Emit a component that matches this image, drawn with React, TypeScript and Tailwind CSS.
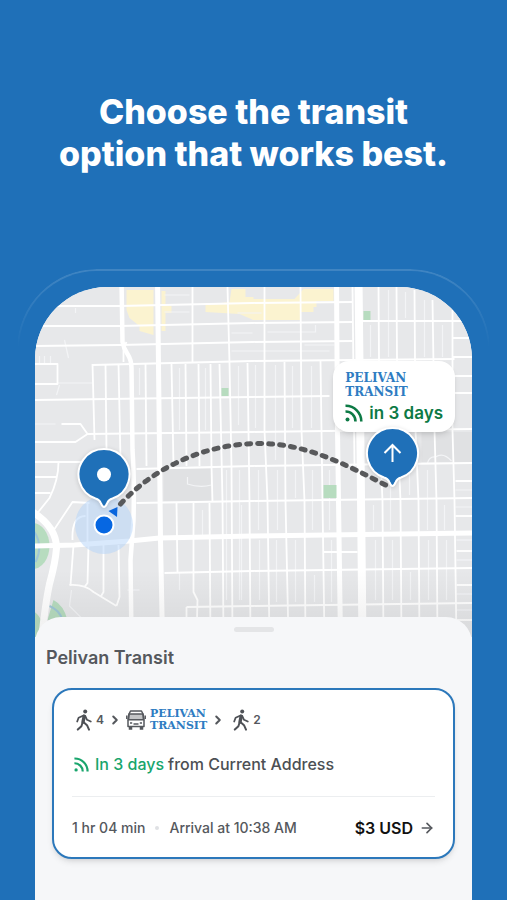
import { ArrowRight, ChevronRight } from "lucide-react"

// Map, route and pins share one coordinate space
const MAP_VIEWBOX = "35 287 438 350"

const wideRoads = [
  { d: "M122 280 L123 342 Q124 348 128 354 Q132 360 132 368 L133 450 Q135 480 134 520 L131 560 L132 640", w: 4.5 },
  { d: "M158 280 L160 450 L161 540 L163 640", w: 5 },
  { d: "M337 280 L338 430 L341 640", w: 5 },
  { d: "M359 280 L361 450 L363 640", w: 8 },
  { d: "M30 546 L75 545 L130 541 L160 538 L253 536 L480 533", w: 5 },
  { d: "M30 510 Q57 526 57 548 Q56 562 50 584 Q46 602 42 640", w: 7 },
]

const roads = [
  "M35 306 L120 306 L253 303 L353 302",
  "M35 326 L120 326 L253 323 L353 322",
  "M35 346 L120 345 L253 342 L353 341",
  "M93 365 L253 361 L455 359",
  "M35 400 L253 397 L330 396",
  "M88 434 L253 432 L473 429",
  "M137 469 L253 466 L473 463",
  "M137 503 L253 501 L473 498",
  "M165 573 L253 571 L473 568",
  "M187 607 L253 606 L473 603",
  "M363 321 L463 321",
  "M193 287 L193 363",
  "M228 287 L230 363 L232 466 L233 640",
  "M265 287 L265 430 L268 501 L270 640",
  "M301 287 L302 430 L305 501 L306 640",
  "M353 287 L355 466",
  "M93 364 L95 440",
  "M106 364 L107 450",
  "M119 364 L121 460",
  "M146 364 L147 466",
  "M172 364 L174 466",
  "M186 364 L187 466",
  "M199 364 L200 466",
  "M211 364 L212 466 L213 502",
  "M220 364 L223 501 L224 640",
  "M248 363 L250 501 L251 640",
  "M285 362 L286 501 L289 640",
  "M321 361 L323 501 L325 640",
  "M379 287 L380 430 L383 501 L384 640",
  "M397 287 L398 430 L401 501 L402 640",
  "M415 290 L416 430 L419 501 L420 640",
  "M433 300 L435 430 L437 501 L438 640",
  "M453 310 L453 430 L455 501 L457 640",
  "M177 503 L178 573",
  "M194 503 L194 592 L198 600 L197 640",
  "M210 503 L211 640",
  "M453 338 H475",
  "M453 357 H475",
  "M453 376 H475",
  "M453 393 H475",
  "M456 481 H475",
  "M456 516 H475",
  "M457 551 H475",
  "M457 585 H475",
  "M457 620 H475",
  "M324 552 H358",
  "M187 607 V640",
  "M35 364 H58 V384 H35",
  "M35 442 H76 L88 434 L81 424 H62",
  "M35 462 H82",
  "M59 462 Q59 480 50 498 L38 513",
  "M35 477 H57",
  "M35 493 H51",
  "M53 532 L73 502 L90 503",
  "M73 540 Q72 516 86 516 M88 502 V545",
  "M74 545 L71 585",
  "M89 545 L88 583 L85 587",
  "M104 545 L104 592 L101 597",
  "M119 545 L120 597 L117 606",
  "M70 585 Q85 584 94 592 L117 606",
  "M127 342 L124 348 V362",
]

const lanes = [
  "M35 424 H56", "M65 340 L69 358", "M58 383 H93", "M40 356 V364", "M45 356 V364", "M51 356 V364",
  "M57 395 L60 385", "M76 308 V313", "M165 295 H190", "M165 312 H190", "M232 333 H253", "M232 351 L330 351",
  "M238 313 H262", "M268 332 H316 V325", "M305 345 H335",
  "M239 366 V425", "M256 365 V428", "M276 365 V460", "M293 366 V428", "M312 366 V428",
  "M240 470 V600", "M259 470 V530", "M278 470 V530", "M296 470 V498", "M313 470 V530", "M330 470 V530",
  "M260 540 V600", "M277 540 V602", "M296 540 V602", "M315 575 V602", "M332 540 V602",
  "M371 325 V357", "M389 290 V357", "M406 292 V318", "M425 300 V357", "M443 325 V357",
  "M374 505 V530", "M391 470 V530", "M410 470 V495", "M428 470 V530", "M445 505 V530",
  "M376 540 V600", "M393 540 V600", "M411 572 V600", "M429 540 V600", "M447 540 V600",
  "M140 368 V395", "M180 368 V430", "M206 368 V430", "M227 470 V600", "M242 505 V600",
  "M180 573 V590", "M188 477 V484 Q200 488 212 485 V473", "M128 590 H140", "M203 510 V535",
  "M456 490 H473", "M456 507 H473", "M457 540 H473", "M457 560 H473", "M457 594 H473", "M457 610 H473",
  "M428 463 Q430 456 436 457 Q444 452 452 461", "M72 590 L70 606 L82 618",
]

function CityMap() {
  return (
    <svg viewBox={MAP_VIEWBOX} preserveAspectRatio="xMidYMin slice" className="absolute inset-0 h-full w-full" fill="none">
      <defs>
        <linearGradient id="map-shade" x1="0" y1="570" x2="0" y2="620" gradientUnits="userSpaceOnUse">
          <stop stopColor="#000" stopOpacity="0" />
          <stop offset="1" stopColor="#000" stopOpacity=".05" />
        </linearGradient>
      </defs>
      <rect x="35" y="287" width="438" height="350" fill="#e7e8ea" />
      <path d="M164 469 H212 V501 H164Z M422 432 H473 V462 H422Z" fill="#e0e1e3" />
      <g fill="#fbf3d0">
        <path d="M127 290 H154 V335 L140 331 V326 L130 318 L127 310Z" />
        <path d="M162 291 H166 V306 H172 V313 H166 V331 H162Z" />
        <path d="M232 289 H246 V297 H254 V320 L240 314 L206 312 V305 L230 302Z" />
        <path d="M253 299 H295 L304 289 H334 V301 H317 V307 H314 V312 H301 V320 H253Z" />
      </g>
      <g fill="#b7dcbf">
        <path d="M222 388 H229 V396 H222Z M364 311 H371 V320 H364Z" />
        <ellipse cx="33" cy="546" rx="17" ry="23" />
        <path d="M54 600 Q64 605 68 620 H48Z M35 612 Q44 618 45 637 H35Z" />
      </g>
      <path d="M35 532 Q44 546 36 562 M50 606 Q60 610 63 620" stroke="#9fc7d6" strokeWidth="2" />
      <g stroke="#f3f4f6" strokeWidth="1.2">
        {lanes.map((d) => (
          <path key={d} d={d} />
        ))}
      </g>
      <g stroke="#fff" strokeWidth="1.8" strokeLinejoin="round">
        {roads.map((d) => (
          <path key={d} d={d} />
        ))}
      </g>
      {wideRoads.map((road) => (
        <path key={road.d} d={road.d} stroke="#fff" strokeWidth={road.w} strokeLinejoin="round" />
      ))}
      <path d="M324 485 H337 V498 H324Z" fill="#b7dcbf" />
      <rect x="35" y="570" width="438" height="67" fill="url(#map-shade)" />
      <circle cx="104.5" cy="525" r="29" fill="#b4d4fa" fillOpacity=".5" />
      <path d="M109 511 L118 507 L117.5 517Z" fill="#0a66dd" />
      <circle cx="104.5" cy="525" r="9.5" fill="#0667e2" stroke="#fff" strokeWidth="2" />
      <path
        d="M121 504 C157 465 208 444 258 443.5 C306 443 345 464 388 486"
        stroke="#58595b"
        strokeWidth="5"
        strokeLinecap="round"
        strokeDasharray="4 7"
      />
    </svg>
  )
}

function MapPins() {
  return (
    <svg
      viewBox={MAP_VIEWBOX}
      preserveAspectRatio="xMidYMin slice"
      className="pointer-events-none absolute inset-0 h-full w-full drop-shadow-sm"
      fill="none"
    >
      <g fill="#1f70b8" stroke="#fff" strokeWidth="2" strokeLinejoin="round">
        <path d="M104.5 507 Q103 507 101.5 503.5 Q100 499.5 96 498.5 A25.5 25.5 0 1 1 113 498.5 Q109 499.5 107.5 503.5 Q106 507 104.5 507Z" />
        <path d="M393 486 Q391.5 486 390 482.5 Q388.5 478.5 384.5 477.5 A25.5 25.5 0 1 1 401.5 477.5 Q397.5 478.5 396 482.5 Q394.5 486 393 486Z" />
      </g>
      <circle cx="104.5" cy="474.5" r="7" fill="#fff" />
      <path d="M393 462 V446 M385 453 L393 445 L401 453" stroke="#fff" strokeWidth="2" />
    </svg>
  )
}

function WalkIcon() {
  return (
    <svg viewBox="0 0 16 22" className="h-[22px] w-4" fill="none" stroke="#4e5156" strokeLinecap="round" strokeLinejoin="round">
      <circle cx="9.2" cy="2.6" r="2" fill="#4e5156" stroke="none" />
      <path d="M8.2 7.2 L7 13" strokeWidth="3.4" />
      <path d="M7.500 6.500 L2.600 8.800 L1.200 12.500 M9.200 7 L11 10.800 L14.800 12.500" strokeWidth="1.800" />
      <path d="M7.400 13 L11 16.200 L13 20.600 M6.400 14 L5.400 17.200 L1.800 20.600" strokeWidth="2" />
    </svg>
  )
}

function LiveIcon({ className }: { className: string }) {
  return (
    <svg viewBox="0 0 18 18" className={className} fill="none" stroke="currentColor" strokeWidth="2.6">
      <path d="M0.5 1.8 A15.5 15.5 0 0 1 16.3 17.5" />
      <path d="M0.5 7.5 A9.8 9.8 0 0 1 10.5 17.5" />
      <circle cx="2.5" cy="15.5" r="2" fill="currentColor" stroke="none" />
    </svg>
  )
}

function BusIcon() {
  return (
    <svg viewBox="0 0 20 20" className="h-5 w-5" fill="none" stroke="#55585d" strokeWidth="1.5">
      <path d="M4.5 1 H15.5 L17.2 4.5 L18 10 V16.5 H2 V10 L2.8 4.5Z" fill="#fff" strokeLinejoin="round" />
      <path d="M3.2 4 H16.8 L17.5 9.8 H2.5Z" fill="#c4c5c7" />
      <path d="M0.8 5.5 V9 M19.2 5.5 V9" />
      <path d="M4 13 H6.2 M13.8 13 H16 M7.5 14 H12.5" />
      <path d="M3.5 16.5 V19 H5.5 V16.5 M14.5 16.5 V19 H16.5 V16.5" fill="#55585d" />
    </svg>
  )
}

function PhoneOutline() {
  return (
    <div className="pointer-events-none absolute -inset-x-[18px] -top-[18px] h-20 rounded-t-[90px] border-2 border-b-0 border-white/15 [mask-image:linear-gradient(black,transparent)]" />
  )
}

export default function App() {
  return (
    <main className="flex min-h-screen flex-col overflow-hidden bg-[#1f70b8] font-['Inter',sans-serif]">
      <h1 className="pt-[91px] text-center text-[34px] leading-[42px] font-extrabold text-white">
        Choose the transit
        <br />
        option that works best.
      </h1>

      <section className="relative mx-[35px] mt-28 flex flex-1 flex-col">
        <PhoneOutline />
        <div className="relative flex flex-1 flex-col overflow-hidden rounded-t-[72px] bg-[#f6f7f9]">
          <div className="relative h-[350px]">
            <CityMap />
            <div className="absolute top-[74px] right-[17px] rounded-2xl bg-white px-3 pt-2.5 pb-[7px] shadow-md">
              <p className="font-['DejaVu_Serif',serif] text-[12px] leading-[14px] font-bold text-[#2e7cc2]">
                PELIVAN
                <br />
                TRANSIT
              </p>
              <p className="mt-0.5 flex items-center gap-1.5 text-[17px] leading-6 font-semibold text-[#0d7a45]">
                <LiveIcon className="h-[18px] w-[18px]" />
                in 3 days
              </p>
            </div>
            <MapPins />
          </div>

          <div className="relative -mt-5 flex-1 rounded-t-[26px] bg-[#f6f7f9] px-[17px] pt-2.5 pb-10">
            <div className="mx-auto h-[5px] w-10 rounded-full bg-[#e4e5e7]" />
            <h2 className="mt-3.5 -ml-1.5 text-[18px] leading-6 font-semibold text-[#55585d]">Pelivan Transit</h2>

            <a href="#trip" className="mt-[18px] block rounded-[20px] border-2 border-[#2c78bb] bg-white px-[18px] pt-[18px] pb-[17px] shadow-md">
              <div className="flex h-6 items-center text-[12px] font-semibold text-[#55585d]">
                <span className="ml-1 flex items-center gap-1">
                  <WalkIcon />
                  4
                </span>
                <ChevronRight className="mx-1 h-3.5 w-3.5" strokeWidth={3.5} />
                <BusIcon />
                <span className="ml-1 font-['DejaVu_Serif',serif] text-[11px] leading-3 font-bold text-[#2e7cc2]">
                  PELIVAN
                  <br />
                  TRANSIT
                </span>
                <ChevronRight className="mx-1 h-3.5 w-3.5" strokeWidth={3.5} />
                <span className="ml-1 flex items-center gap-1">
                  <WalkIcon />
                  2
                </span>
              </div>

              <p className="mt-5 flex items-center text-[16px] leading-6 font-medium text-[#4c4f54]">
                <LiveIcon className="mr-1.5 ml-0.5 h-[15px] w-[15px] text-[#18a56c]" />
                <span className="mr-1 text-[#18a56c]">In 3 days</span>
                from Current Address
              </p>

              <div className="mt-5 flex items-center border-t border-[#eceef0] pt-[19px] text-[14px] leading-6 font-medium text-[#55585d]">
                <span>1 hr 04 min</span>
                <span className="mx-2.5 h-1 w-1 rounded-full bg-[#dfe1e4]" />
                <span>Arrival at 10:38 AM</span>
                <span className="ml-auto text-[16px] font-semibold text-[#111]">$3 USD</span>
                <ArrowRight className="ml-1.5 h-4 w-4" strokeWidth={2.5} />
              </div>
            </a>
          </div>
        </div>
      </section>
    </main>
  )
}
